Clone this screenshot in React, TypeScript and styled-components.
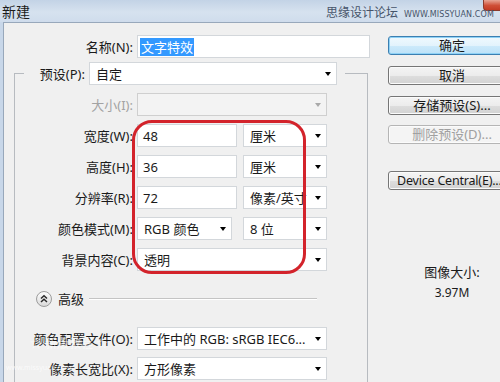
import React from "react";
import styled, { createGlobalStyle, css } from "styled-components";

const Global = createGlobalStyle`
  html, body { margin: 0; padding: 0; width: 500px; height: 382px; overflow: hidden; background: #f0f0f0; }
  body { font-family: "Noto Sans", "Noto Sans CJK SC", sans-serif; font-size: 13px; color: #1a1a1a; }
  * { box-sizing: border-box; }
`;

const Window = styled.div`
  position: relative;
  width: 500px;
  height: 382px;
  overflow: hidden;
  display: flex;
  flex-direction: column;
  background: #c8d7e9;
`;

const TitleBar = styled.div`
  height: 22px;
  flex: none;
  display: flex;
  align-items: flex-start;
  background: linear-gradient(180deg, #c3d3e6 0%, #d6e2ef 55%, #cfdcec 100%);
`;

const Title = styled.div`
  padding: 3px 0 0 2px;
  font-size: 14px;
  line-height: 17px;
  color: #1c1c1c;
`;

const CloseButton = styled.div`
  margin-left: auto;
  width: 17px;
  height: 11px;
  background: linear-gradient(180deg, #e7a595 0%, #cf4f37 55%, #c33b24 100%);
  border-left: 1px solid #8c3a2c;
  border-bottom: 1px solid #8c3a2c;
  border-radius: 0 0 0 4px;
`;

const Watermark = styled.div`
  position: absolute;
  top: 5px;
  left: 326px;
  display: flex;
  align-items: baseline;
  gap: 6px;
  color: #46546a;
  white-space: nowrap;
`;

const WatermarkCn = styled.span`
  font-size: 12px;
  line-height: 16px;
`;

const WatermarkEn = styled.span`
  font-family: "DejaVu Sans", sans-serif;
  font-size: 8px;
  letter-spacing: 0.1px;
`;

const Body = styled.div`
  flex: 1;
  min-height: 0;
  display: flex;
  margin-left: 3px;
  border-top: 1px solid #98a8bb;
  border-left: 1px solid #98a8bb;
  background: #f0f0f0;
`;

const LeftPane = styled.div`
  width: 384px;
  flex: none;
  display: flex;
  flex-direction: column;
  padding-top: 12px;
`;

const RightPane = styled.div`
  width: 128px;
  flex: none;
  display: flex;
  flex-direction: column;
  padding-top: 13px;
`;

const NameRow = styled.div`
  display: grid;
  grid-template-columns: 129px 233px;
  column-gap: 4px;
  align-items: center;
`;

const Label = styled.div<{ $disabled?: boolean }>`
  text-align: right;
  white-space: nowrap;
  font-size: 13px;
  line-height: 18px;
  color: ${(p) => (p.$disabled ? "#a3a3a3" : "#1a1a1a")};
`;

const fieldBase = css`
  height: 23px;
  flex: none;
  background: #fff;
  border: 1px solid #d3d7db;
  display: flex;
  align-items: center;
  font-size: 13px;
  line-height: 18px;
  white-space: nowrap;
  overflow: hidden;
`;

const TextField = styled.div<{ $w: number; $pad?: number }>`
  ${fieldBase};
  width: ${(p) => p.$w}px;
  padding: 0 4px 0 ${(p) => p.$pad ?? 5}px;
`;

const Selected = styled.span`
  background: #3399ff;
  color: #fff;
  padding: 0 1px;
`;

const Select = styled.div<{ $w: number; $disabled?: boolean }>`
  ${fieldBase};
  width: ${(p) => p.$w}px;
  padding: 0 5px 0 6px;
  justify-content: space-between;
  background: ${(p) => (p.$disabled ? "#f3f3f3" : "#fff")};
  border-color: ${(p) => (p.$disabled ? "#cfcfcf" : "#d3d7db")};
`;

const Arrow = styled.span<{ $disabled?: boolean }>`
  flex: none;
  width: 0;
  height: 0;
  margin-left: 4px;
  border-left: 3.5px solid transparent;
  border-right: 3.5px solid transparent;
  border-top: 4px solid ${(p) => (p.$disabled ? "#a9a9a9" : "#000")};
`;

const GroupBox = styled.fieldset`
  margin: 4px 0 0 10px;
  padding: 8px 0 0 0;
  width: 354px;
  min-width: 0;
  flex: 1;
  border: 1px solid #b7bbc0;
  border-bottom: none;
`;

const Legend = styled.legend`
  margin-left: 9px;
  padding: 0 8px 0 0;
  display: flex;
  align-items: center;
  gap: 4px;
`;

const LegendLabel = styled(Label)`
  width: 61px;
`;

const FieldRow = styled.div<{ $top?: number }>`
  display: grid;
  grid-template-columns: 118px auto;
  column-gap: 4px;
  align-items: center;
  margin-top: ${(p) => p.$top ?? 8}px;
`;

const Fields = styled.div<{ $gap: number }>`
  display: flex;
  gap: ${(p) => p.$gap}px;
`;

const AdvancedRow = styled.div`
  display: flex;
  align-items: center;
  margin-top: 19px;
  padding-left: 21px;
  height: 17px;
`;

const AdvancedText = styled.span`
  margin-left: 6px;
  font-size: 13px;
  line-height: 18px;
`;

const AdvancedLine = styled.div`
  margin-left: 5px;
  width: 228px;
  height: 2px;
  border-top: 1px solid #c4c4c4;
  border-bottom: 1px solid #ffffff;
`;

const Button = styled.div<{ $default?: boolean; $disabled?: boolean; $top: number }>`
  margin-top: ${(p) => p.$top}px;
  width: 128px;
  height: 19px;
  flex: none;
  display: flex;
  align-items: center;
  justify-content: center;
  font-size: 13px;
  line-height: 17px;
  white-space: nowrap;
  border-radius: 3px;
  color: ${(p) => (p.$disabled ? "#a0a0a0" : "#1a1a1a")};
  border: 1px solid ${(p) => (p.$default ? "#3c7fb1" : p.$disabled ? "#b5b5b5" : "#767676")};
  background: ${(p) =>
    p.$default
      ? "linear-gradient(180deg, #f0f9fe 0%, #e3f3fc 50%, #cdeafb 51%, #bde2f8 100%)"
      : p.$disabled
      ? "#f4f4f4"
      : "linear-gradient(180deg, #f4f4f4 0%, #ececec 50%, #dedede 51%, #d2d2d2 100%)"};
  box-shadow: inset 0 0 0 1px ${(p) => (p.$default ? "#8fd2f6" : "#fbfbfb")};
`;

const LeftButton = styled(Button)`
  justify-content: flex-start;
  padding-left: 8px;
  font-size: 12.5px;
  letter-spacing: -0.2px;
`;

const Info = styled.div`
  margin-top: 74px;
  display: flex;
  flex-direction: column;
  align-items: center;
  gap: 5px;
  font-size: 13px;
  line-height: 17px;
`;

const InfoValue = styled.div`
  font-size: 12px;
  line-height: 14px;
`;

const Annotation = styled.div`
  position: absolute;
  left: 132px;
  top: 120px;
  width: 174px;
  height: 154px;
  border: 3px solid #d3232b;
  border-radius: 20px;
  pointer-events: none;
`;

const CornerMark = styled.div`
  position: absolute;
  left: 30px;
  top: 337px;
  color: rgba(255, 255, 255, 0.6);
  font-size: 12px;
  line-height: 14px;
  white-space: nowrap;
`;

const CornerUrl = styled.div`
  position: absolute;
  left: 6px;
  top: 364px;
  color: rgba(255, 255, 255, 0.7);
  font-size: 7px;
  line-height: 8px;
  white-space: nowrap;
`;

const CollapseIcon = () => (
  <svg width="16" height="16" viewBox="0 0 16 16">
    <defs>
      <linearGradient id="cg" x1="0" y1="0" x2="0" y2="1">
        <stop offset="0" stopColor="#ffffff" />
        <stop offset="1" stopColor="#d8d8d8" />
      </linearGradient>
    </defs>
    <circle cx="8" cy="8" r="7.5" fill="url(#cg)" stroke="#9c9c9c" />
    <path d="M5 7.5 L8 4.8 L11 7.5 M5 11 L8 8.3 L11 11" fill="none" stroke="#2a2a2a" strokeWidth="1.5" />
  </svg>
);

export default function App() {
  return (
    <>
      <Global />
      <Window>
        <TitleBar>
          <Title>新建</Title>
          <CloseButton />
        </TitleBar>
        <Watermark>
          <WatermarkCn>思缘设计论坛</WatermarkCn>
          <WatermarkEn>WWW.MISSYUAN.COM</WatermarkEn>
        </Watermark>
        <Body>
          <LeftPane>
            <NameRow>
              <Label>名称(N):</Label>
              <TextField $w={233} $pad={2}>
                <Selected>文字特效</Selected>
              </TextField>
            </NameRow>
            <GroupBox>
              <Legend>
                <LegendLabel>预设(P):</LegendLabel>
                <Select $w={248}>
                  自定
                  <Arrow />
                </Select>
              </Legend>
              <FieldRow $top={0}>
                <Label $disabled>大小(I):</Label>
                <Select $w={190} $disabled>
                  <span />
                  <Arrow $disabled />
                </Select>
              </FieldRow>
              <FieldRow>
                <Label>宽度(W):</Label>
                <Fields $gap={6}>
                  <TextField $w={100}>48</TextField>
                  <Select $w={84}>
                    厘米
                    <Arrow />
                  </Select>
                </Fields>
              </FieldRow>
              <FieldRow>
                <Label>高度(H):</Label>
                <Fields $gap={6}>
                  <TextField $w={100}>36</TextField>
                  <Select $w={84}>
                    厘米
                    <Arrow />
                  </Select>
                </Fields>
              </FieldRow>
              <FieldRow>
                <Label>分辨率(R):</Label>
                <Fields $gap={6}>
                  <TextField $w={100}>72</TextField>
                  <Select $w={84}>
                    像素/英寸
                    <Arrow />
                  </Select>
                </Fields>
              </FieldRow>
              <FieldRow>
                <Label>颜色模式(M):</Label>
                <Fields $gap={11}>
                  <Select $w={95}>
                    RGB 颜色
                    <Arrow />
                  </Select>
                  <Select $w={84}>
                    8 位
                    <Arrow />
                  </Select>
                </Fields>
              </FieldRow>
              <FieldRow>
                <Label>背景内容(C):</Label>
                <Select $w={190}>
                  透明
                  <Arrow />
                </Select>
              </FieldRow>
              <AdvancedRow>
                <CollapseIcon />
                <AdvancedText>高级</AdvancedText>
                <AdvancedLine />
              </AdvancedRow>
              <FieldRow $top={20}>
                <Label>颜色配置文件(O):</Label>
                <Select $w={190}>
                  工作中的 RGB: sRGB IEC6...
                  <Arrow />
                </Select>
              </FieldRow>
              <FieldRow $top={7}>
                <Label>像素长宽比(X):</Label>
                <Select $w={190}>
                  方形像素
                  <Arrow />
                </Select>
              </FieldRow>
            </GroupBox>
          </LeftPane>
          <RightPane>
            <Button $default $top={0}>确定</Button>
            <Button $top={11}>取消</Button>
            <Button $top={11}>存储预设(S)...</Button>
            <Button $disabled $top={10}>删除预设(D)...</Button>
            <LeftButton $top={27}>Device Central(E)...</LeftButton>
            <Info>
              <div>图像大小:</div>
              <InfoValue>3.97M</InfoValue>
            </Info>
          </RightPane>
        </Body>
        <Annotation />
        <CornerMark>☆ 新版教程 ☆</CornerMark>
        <CornerUrl>www.missyuan.com</CornerUrl>
      </Window>
    </>
  );
}
